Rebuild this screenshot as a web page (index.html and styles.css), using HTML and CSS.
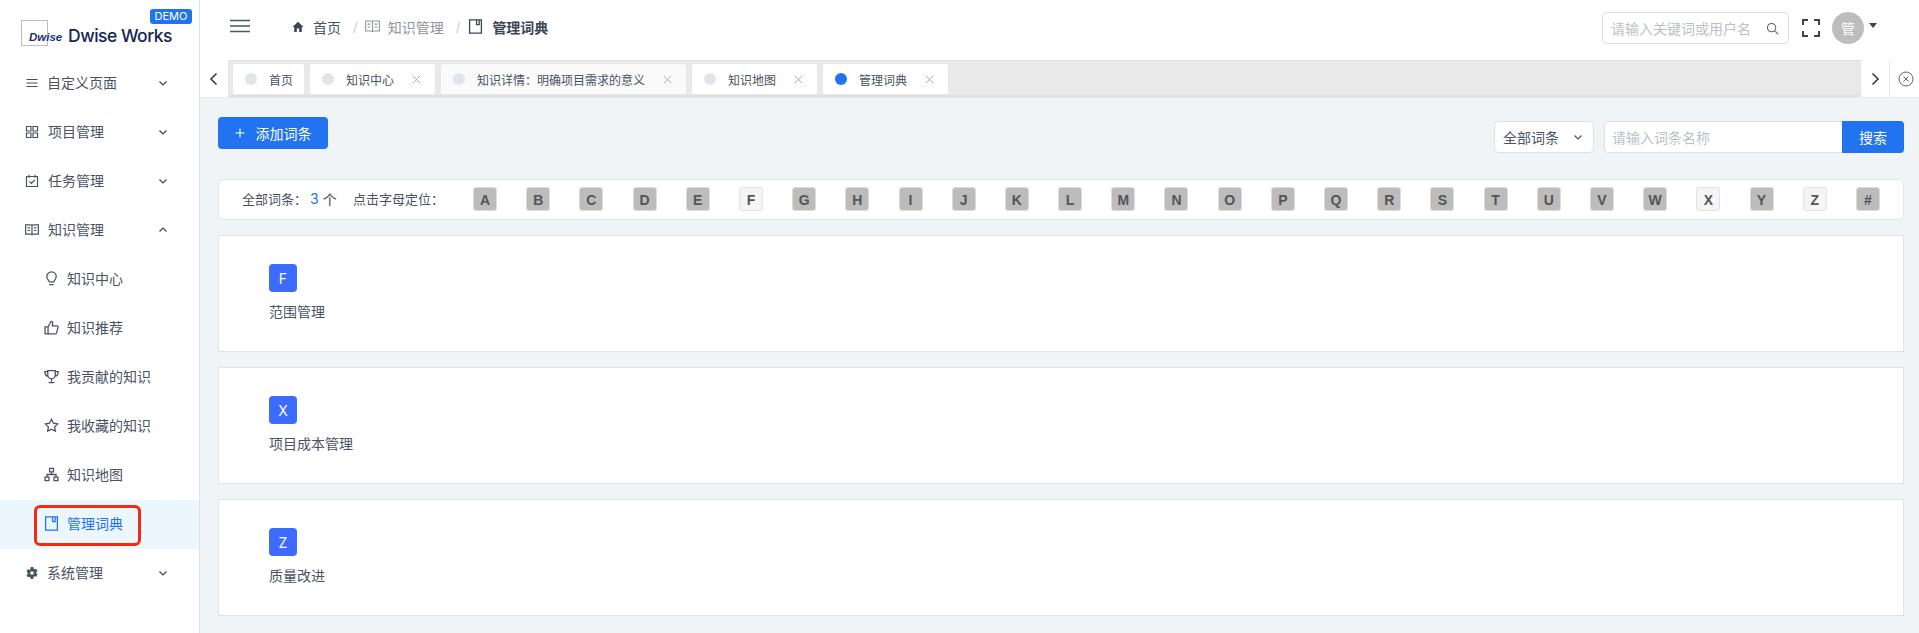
FILE: index.html
```html
<!DOCTYPE html>
<html lang="zh">
<head>
<meta charset="utf-8">
<title>管理词典</title>
<link rel="stylesheet" href="styles.css">
</head>
<body>
<div class="app">
  <aside class="sidebar">
    <div class="logo">
      <div class="logo-box"><span class="logo-mark">Dwise</span></div>
      <span class="logo-name">Dwise Works</span>
      <span class="demo">DEMO</span>
    </div>
    <nav class="menu">
      <div class="item">
        <svg class="ic" viewBox="0 0 14 14"><path d="M1.500 3.500h11M1.500 7h11M1.500 10.500h11"/></svg>
        <span class="lbl first">自定义页面</span>
        <svg class="chev" viewBox="0 0 10 10"><path d="M1.500 3.500 5 7l3.500-3.500"/></svg>
      </div>
      <div class="item">
        <svg class="ic" viewBox="0 0 14 14"><path d="M1.500 1.500h4.500v4.500h-4.500zM8 1.500h4.500v4.500H8zM1.500 8h4.500v4.500h-4.500zM8 8h4.500v4.500H8z"/></svg>
        <span class="lbl">项目管理</span>
        <svg class="chev" viewBox="0 0 10 10"><path d="M1.500 3.500 5 7l3.500-3.500"/></svg>
      </div>
      <div class="item">
        <svg class="ic" viewBox="0 0 14 14"><path d="M1.500 2.500h11v10h-11zM4 .8v3M10 .8v3M4.500 7.500 6.500 9.500 9.800 5.800"/></svg>
        <span class="lbl">任务管理</span>
        <svg class="chev" viewBox="0 0 10 10"><path d="M1.500 3.500 5 7l3.500-3.500"/></svg>
      </div>
      <div class="item">
        <svg class="ic" viewBox="0 0 14 14"><path d="M.6 1.800H6q1 0 1 1v9.400q0-1-1-1H.6zM13.400 1.800H8q-1 0-1 1v9.400q0-1 1-1h5.400zM2.500 4.800h2.500M2.500 7.500h2.500M9 4.800h2.500M9 7.500h2.500"/></svg>
        <span class="lbl">知识管理</span>
        <svg class="chev" viewBox="0 0 10 10"><path d="M1.500 6.500 5 3l3.500 3.500"/></svg>
      </div>
      <div class="item sub">
        <svg class="ic" viewBox="0 0 14 14"><path d="M5 10.200C4.600 8.600 2.600 7.600 2.600 5.200a4.400 4.400 0 0 1 8.800 0c0 2.400-2 3.400-2.400 5zM5 12.800h4"/></svg>
        <span class="lbl">知识中心</span>
      </div>
      <div class="item sub">
        <svg class="ic" viewBox="0 0 14 14"><path d="M1 6.500h2.800v6.500H1zM3.800 6.500 6.500 1.200c1.400 0 1.800 1 1.600 2L7.700 5.500h4.400c.8 0 1.200.7 1 1.400L11.700 12c-.2.600-.6 1-1.200 1H3.800"/></svg>
        <span class="lbl">知识推荐</span>
      </div>
      <div class="item sub">
        <svg class="ic" viewBox="0 0 14 14"><path d="M3.500 1.500h7v4a3.500 3.500 0 0 1-7 0zM3.500 2.500H.8c0 2.500 1 4 3 4.300M10.500 2.500h2.700c0 2.500-1 4-3 4.300M7 9v3M4.300 12.800h5.400"/></svg>
        <span class="lbl">我贡献的知识</span>
      </div>
      <div class="item sub">
        <svg class="ic" viewBox="0 0 14 14"><path d="m7 1.200 1.800 3.700 4 .6-2.900 2.800.7 4L7 10.400l-3.600 1.900.7-4L1.200 5.500l4-.6z"/></svg>
        <span class="lbl">我收藏的知识</span>
      </div>
      <div class="item sub">
        <svg class="ic" viewBox="0 0 14 14"><path d="M5.200 1.200h3.600v3.300H5.200zM1 9.500h3.600v3.300H1zM9.400 9.500H13v3.300H9.400zM7 4.500V7M2.800 9.500V7h8.400v2.500"/></svg>
        <span class="lbl">知识地图</span>
      </div>
      <div class="item sub active">
        <svg class="ic" viewBox="0 0 14 14"><path d="M1.500.8h11v12.400h-11zM8 .8v4.500h2.400V.8"/></svg>
        <span class="lbl">管理词典</span>
        <span class="mark"></span>
      </div>
      <div class="item">
        <svg class="ic solid" viewBox="0 0 14 14"><path d="M8.300 1l.3 1.600 1 .6 1.600-.5 1.300 2.300-1.200 1.100v1.200l1.200 1.100-1.300 2.300-1.600-.5-1 .6L8.300 13H5.700l-.3-1.600-1-.6-1.600.5-1.300-2.300 1.200-1.100V6.700L1.500 5.600l1.300-2.300 1.600.5 1-.6L5.700 1zM7 5.200a1.800 1.800 0 1 0 0 3.600 1.800 1.800 0 0 0 0-3.600z"/></svg>
        <span class="lbl first">系统管理</span>
        <svg class="chev" viewBox="0 0 10 10"><path d="M1.500 3.500 5 7l3.500-3.500"/></svg>
      </div>
    </nav>
  </aside>

  <div class="main">
    <header class="topbar">
      <svg class="burger" viewBox="0 0 20 14"><path d="M0 1.500h20M0 7h20M0 12.500h20"/></svg>
      <div class="crumbs">
        <svg class="home" viewBox="0 0 12 12"><path d="M6 .8 .5 6h1.700v5h2.600V7.500h2.400V11h2.600V6h1.700z"/></svg>
        <span class="crumb">首页</span>
        <span class="sep">/</span>
        <svg class="crumb-ic" viewBox="0 0 14 14"><path d="M.6 1.800H6q1 0 1 1v9.400q0-1-1-1H.6zM13.400 1.800H8q-1 0-1 1v9.400q0-1 1-1h5.400zM2.500 4.800h2.500M2.500 7.500h2.500M9 4.800h2.500M9 7.500h2.500"/></svg>
        <span class="crumb muted">知识管理</span>
        <span class="sep">/</span>
        <svg class="crumb-ic dark" viewBox="0 0 14 14"><path d="M1.500.8h11v12.400h-11zM8 .8v4.500h2.400V.8"/></svg>
        <span class="crumb current">管理词典</span>
      </div>
      <div class="top-right">
        <div class="top-search">
          <span class="ph">请输入关键词或用户名</span>
          <svg class="mag" viewBox="0 0 14 14"><circle cx="6" cy="6" r="4.500"/><path d="m9.500 9.500 3.500 3.500"/></svg>
        </div>
        <svg class="full" viewBox="0 0 18 18"><path d="M1 6V1h5M12 1h5v5M17 12v5h-5M6 17H1v-5"/></svg>
        <span class="avatar">管</span>
        <span class="caret"></span>
      </div>
    </header>

    <div class="tabsrow">
      <button class="tab-nav" type="button"><svg viewBox="0 0 10 14"><path d="M7.500 1.500 2 7l5.500 5.500"/></svg></button>
      <div class="tabs">
        <div class="tab home-tab"><i class="dot"></i><span>首页</span></div>
        <div class="tab"><i class="dot"></i><span>知识中心</span><svg class="x" viewBox="0 0 10 10"><path d="m1 1 8 8M9 1 1 9"/></svg></div>
        <div class="tab soft"><i class="dot"></i><span>知识详情：明确项目需求的意义</span><svg class="x" viewBox="0 0 10 10"><path d="m1 1 8 8M9 1 1 9"/></svg></div>
        <div class="tab"><i class="dot"></i><span>知识地图</span><svg class="x" viewBox="0 0 10 10"><path d="m1 1 8 8M9 1 1 9"/></svg></div>
        <div class="tab"><i class="dot on"></i><span>管理词典</span><svg class="x" viewBox="0 0 10 10"><path d="m1 1 8 8M9 1 1 9"/></svg></div>
      </div>
      <button class="tab-nav next" type="button"><svg viewBox="0 0 10 14"><path d="M2.500 1.500 8 7l-5.500 5.500"/></svg></button>
      <button class="tab-close" type="button"><svg viewBox="0 0 16 16"><circle cx="8" cy="8" r="7"/><path d="m5.500 5.500 5 5M10.500 5.500l-5 5"/></svg></button>
    </div>

    <main class="content">
      <div class="toolbar">
        <button class="add" type="button"><svg viewBox="0 0 10 10"><path d="M5 .5v9M.5 5h9"/></svg>添加词条</button>
        <div class="filters">
          <div class="select"><span>全部词条</span><svg viewBox="0 0 10 10"><path d="M1.500 3.500 5 7l3.500-3.500"/></svg></div>
          <div class="query"><span class="ph">请输入词条名称</span><button type="button">搜索</button></div>
        </div>
      </div>

      <div class="alpha">
        <div class="stats"><span>全部词条：</span><b>3</b><span class="unit">个</span></div>
        <span class="hint">点击字母定位：</span>
        <div class="letters">
          <a>A</a><a>B</a><a>C</a><a>D</a><a>E</a><a class="has">F</a><a>G</a><a>H</a><a>I</a><a>J</a><a>K</a><a>L</a><a>M</a><a>N</a><a>O</a><a>P</a><a>Q</a><a>R</a><a>S</a><a>T</a><a>U</a><a>V</a><a>W</a><a class="has">X</a><a>Y</a><a class="has">Z</a><a>#</a>
        </div>
      </div>

      <section class="card"><span class="badge">F</span><p>范围管理</p></section>
      <section class="card"><span class="badge">X</span><p>项目成本管理</p></section>
      <section class="card"><span class="badge">Z</span><p>质量改进</p></section>
    </main>
  </div>
</div>
</body>
</html>
```

FILE: styles.css
```css
* { box-sizing: border-box; }
html, body { margin: 0; height: 100%; overflow: hidden; }
body {
  font-family: "Inter", "Noto Sans CJK SC", sans-serif;
  font-size: 14px;
  color: #4a5264;
  background: #f0f4f7;
}
svg { fill: none; stroke: currentColor; display: block; flex: none; }
button { font: inherit; border: 0; padding: 0; }
p { margin: 0; }

.app { display: flex; height: 633px; }

/* sidebar */
.sidebar { width: 200px; flex: none; background: #fff; border-right: 1px solid #dfe3e8; }
.logo { position: relative; height: 59px; display: flex; align-items: flex-start; padding: 20px 0 0 21px; }
.logo-box { width: 27px; height: 26px; border: 1px solid #bdbdbd; position: relative; }
.logo-mark {
  position: absolute; left: 7px; top: 9px;
  font: italic 700 11.500px/14px "Liberation Sans", sans-serif;
  color: #16307a;
}
.logo-name {
  margin-left: 20px; margin-top: 4px;
  font: 500 17.500px/24px "Inter", sans-serif;
  letter-spacing: -.5px;
  color: #14264f;
}
.demo {
  position: absolute; left: 150px; top: 9px;
  width: 42px; height: 15px;
  background: #2173f0; color: #fff; border-radius: 3px;
  font: 11px/15px "Inter", sans-serif; text-align: center;
}
.menu { display: flex; flex-direction: column; }
.item {
  position: relative;
  height: 49px; flex: none;
  display: flex; align-items: center;
  padding: 0 31px 2px 25px;
  color: #4a5264;
}
.item .ic { width: 14px; height: 14px; stroke: #4a5264; stroke-width: 1.200; }
.item .ic.solid { fill: #4a5264; fill-rule: evenodd; stroke: none; }
.item .lbl { margin-left: 9px; line-height: 20px; }
.item .lbl.first { margin-left: 8px; }
.chev { width: 10px; height: 10px; margin-left: auto; stroke: #3c4456; stroke-width: 1.200; }
.item.sub { padding-left: 44px; }
.item.sub .ic { width: 15px; height: 15px; }
.item.sub .lbl { margin-left: 8px; }
.item.active { background: #ebf7fd; color: #2173f0; }
.item.active .ic { stroke: #2173f0; }
.mark {
  position: absolute; left: 34px; top: 5px;
  width: 107px; height: 41px;
  border: 3px solid #f62a12; border-radius: 6px;
}

/* main */
.main { flex: 1; min-width: 0; display: flex; flex-direction: column; }

.topbar {
  height: 60px; flex: none; background: #fff;
  display: flex; align-items: center;
  padding: 0 42px 4px 30px;
}
.burger { width: 20px; height: 14px; margin-bottom: 5px; stroke: #47566a; stroke-width: 1.600; }
.crumbs { display: flex; align-items: center; margin-left: 42px; margin-bottom: 3px; }
.home { width: 12px; height: 12px; fill: #3c4456; stroke: none; }
.crumb { margin-left: 9px; color: #4a5264; }
.crumb.muted { color: #8e939e; margin-left: 8px; }
.crumb.current { font-weight: 700; color: #3c4456; margin-left: 9px; }
.sep { margin-left: 12px; color: #c9ccd2; font-size: 13px; }
.crumb-ic { width: 15px; height: 15px; margin-left: 7px; stroke: #8e939e; stroke-width: 1; }
.crumb-ic.dark { margin-left: 8px; stroke: #3c4456; stroke-width: 1.200; }
.top-right { margin-left: auto; display: flex; align-items: center; }
.top-search {
  width: 187px; height: 32px;
  display: flex; align-items: center; justify-content: space-between;
  padding: 0 9px 0 8px;
  border: 1px solid #dcdfe6; border-radius: 4px;
}
.ph { color: #bcbfc6; }
.mag { width: 13px; height: 13px; stroke: #5b6270; stroke-width: 1.100; }
.full { width: 18px; height: 18px; margin-left: 13px; stroke: #3c4456; stroke-width: 2; }
.avatar {
  width: 32px; height: 32px; margin-left: 12px;
  border-radius: 50%; background: #bdbdbd; color: #fff;
  display: flex; align-items: center; justify-content: center;
}
.caret {
  margin-left: 5px; margin-top: -5px;
  border: 4px solid transparent; border-bottom: 0;
  border-top: 5px solid #3c4456;
}

/* tabs */
.tabsrow {
  height: 38px; flex: none; display: flex; background: #fff;
  border-bottom: 1px solid #e4e7ec;
}
.tab-nav { width: 28px; height: 37px; background: #fff; display: flex; align-items: center; justify-content: center; color: #3c4456; }
.tab-nav svg { width: 10px; height: 14px; stroke-width: 1.700; }
.tab-nav.next { border-right: 1px solid #e4e7ec; width: 29px; }
.tab-close { width: 29px; height: 37px; background: #fff; display: flex; padding: 11px 0 0 8px; color: #4a5264; }
.tab-close svg { width: 16px; height: 16px; stroke-width: .9; }
.tabs {
  flex: 1; min-width: 0; display: flex; gap: 6px;
  padding: 3px 5px 0;
  background: #e9e9e9;
  border-top: 1px solid #dfdfdf;
  border-bottom: 2px solid #dfdfdf;
}
.tab {
  height: 30px; background: #fff; border-radius: 2px;
  display: flex; align-items: center;
  padding: 0 14px 0 12px;
  font-size: 12px; color: #4a5264;
}
.tab.home-tab { padding-right: 11px; }
.tab.soft { background: #fafafa; }
.dot { width: 12px; height: 12px; border-radius: 50%; background: #e1e4e8; margin-right: 12px; flex: none; }
.dot.on { background: #2173f0; }
.x { width: 9px; height: 9px; margin-left: 18px; stroke: #9b9fa8; stroke-width: .9; }

/* content */
.content { flex: 1; min-height: 0; padding: 19px 15px 0 18px; display: flex; flex-direction: column; }
.toolbar { display: flex; justify-content: space-between; align-items: flex-start; height: 61.500px; flex: none; }
.add {
  width: 110px; height: 32px; background: #2173f0; color: #fff; border-radius: 4px;
  display: flex; align-items: center; justify-content: center; gap: 11px;
}
.add svg { width: 10px; height: 10px; stroke-width: 1.100; }
.filters { display: flex; gap: 10px; margin-top: 4px; }
.select {
  width: 100px; height: 32px; background: #fff;
  border: 1px solid #dcdfe6; border-radius: 4px;
  display: flex; align-items: center; justify-content: space-between;
  padding: 0 10px 0 8px; color: #4a5264;
}
.select svg { width: 10px; height: 10px; stroke: #4a5264; stroke-width: 1.100; }
.query {
  width: 300px; height: 32px; background: #fff;
  border: 1px solid #dcdfe6; border-radius: 4px;
  display: flex; align-items: center; justify-content: space-between;
  padding-left: 7px;
}
.query button {
  width: 62px; height: 32px; margin: -1px -1px -1px 0;
  background: #2173f0; color: #fff; border-radius: 0 4px 4px 0;
}

.alpha {
  height: 41px; flex: none; background: #fff;
  border: 1px solid #e2e5ea; border-radius: 5px;
  display: flex; align-items: center;
  padding: 0 23px;
  font-size: 13px;
}
.stats { display: flex; align-items: center; width: 111px; flex: none; padding-bottom: 1px; }
.stats b { font-weight: 400; font-size: 14px; color: #2173f0; margin-left: 3px; }
.stats .unit { margin-left: 4px; color: #3c4456; font-size: 14px; }
.hint { width: 120px; flex: none; padding-bottom: 1px; }
.letters { flex: 1; display: flex; justify-content: space-between; }
.letters a {
  width: 24px; height: 24px;
  background: #bcbcbc; border: 1px solid #dcdcdc; border-radius: 3px;
  display: flex; align-items: center; justify-content: center;
  font: 700 14px/24px "Liberation Sans", sans-serif; color: #555;
  padding-top: 2px;
}
.letters a.has { background: #f5f5f5; border-color: #e1e1e8; }

.card {
  height: 117px; flex: none; margin-top: 15px; background: #fff;
  border: 1px solid #e0e3e8;
  padding: 28px 0 0 50px;
}
.card:first-of-type { margin-top: 15.500px; }
.badge {
  display: flex; width: 28px; height: 28px;
  align-items: center; justify-content: center;
  background: #3d6bff; color: #fff; border-radius: 4px;
}
.card p { margin-top: 10px; line-height: 20px; }
```
